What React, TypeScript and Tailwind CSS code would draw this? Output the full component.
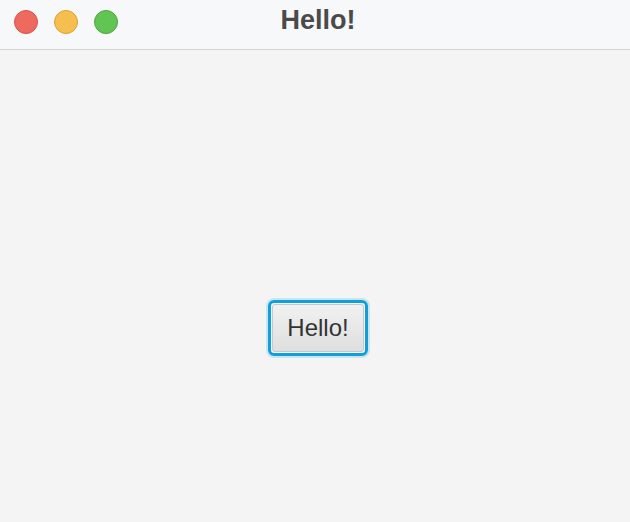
import React from 'react';

function TrafficLights() {
  return (
    <div className="flex items-center gap-4 pl-[14px]">
      <span className="block h-6 w-6 rounded-full border border-[#de4f47] bg-[#ee6a5f]" />
      <span className="block h-6 w-6 rounded-full border border-[#dea032] bg-[#f5bf4f]" />
      <span className="block h-6 w-6 rounded-full border border-[#4ea53d] bg-[#61c554]" />
    </div>
  );
}

export default function App() {
  return (
    <div
      className="flex h-[522px] w-[630px] flex-col overflow-hidden bg-[#f4f4f4]"
      style={{ fontFamily: '"Liberation Sans", Arial, sans-serif' }}
    >
      {/* Title bar */}
      <div className="relative flex h-[50px] shrink-0 items-center border-b border-[#d3d3d3] bg-[#f7f8fa] pb-[6px]">
        <TrafficLights />
        <div className="absolute inset-x-0 top-[4px] pl-[6px] text-center text-[27px] font-bold leading-[32px] text-[#4a4a4a]">
          Hello!
        </div>
      </div>

      {/* Content */}
      <div className="flex flex-1 items-center justify-center pl-[6px] pt-[83px]">
        <button className="rounded-[6px] border-[3px] border-[#0fa0dc] p-px shadow-[0_0_0_2px_rgba(15,160,220,0.18)]">
          <span className="block rounded-[3px] border border-[#c8c8c8] bg-gradient-to-b from-[#f1f1f1] to-[#dfdfdf] px-[14px] py-[9px] text-[24px] leading-[28px] text-[#333333]">
            Hello!
          </span>
        </button>
      </div>
    </div>
  );
}
